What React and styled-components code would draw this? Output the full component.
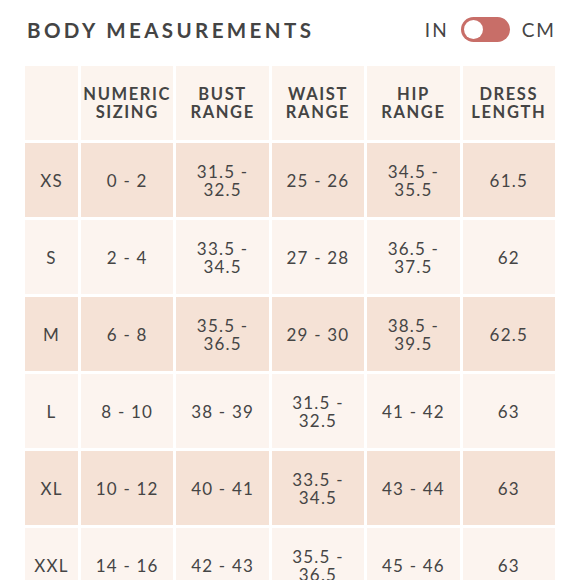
import React from 'react'
import styled, {createGlobalStyle} from 'styled-components'

const GlobalStyle = createGlobalStyle`
    body {
        margin: 0;
        background: #fff;
        font-family: Lato, "Open Sans", sans-serif;
        color: #454545;
    }
`

const columns = ['', 'NUMERIC SIZING', 'BUST RANGE', 'WAIST RANGE', 'HIP RANGE', 'DRESS LENGTH']

const rows = [
    ['XS', '0 - 2', '31.5 - 32.5', '25 - 26', '34.5 - 35.5', '61.5'],
    ['S', '2 - 4', '33.5 - 34.5', '27 - 28', '36.5 - 37.5', '62'],
    ['M', '6 - 8', '35.5 - 36.5', '29 - 30', '38.5 - 39.5', '62.5'],
    ['L', '8 - 10', '38 - 39', '31.5 - 32.5', '41 - 42', '63'],
    ['XL', '10 - 12', '40 - 41', '33.5 - 34.5', '43 - 44', '63'],
    ['XXL', '14 - 16', '42 - 43', '35.5 - 36.5', '45 - 46', '63'],
]

// split "31.5 - 32.5" onto two lines like the original chart
const splitRange = (text) => {
    if (text.length < 9) return text
    const [a, b] = text.split(' - ')
    return <>{a} -<br />{b}</>
}

const App = () => {
    return (
        <Page>
            <GlobalStyle />
            <Header>
                <Title>BODY MEASUREMENTS</Title>
                <UnitSwitch>
                    <UnitLabel>IN</UnitLabel>
                    <Track><Knob /></Track>
                    <UnitLabel>CM</UnitLabel>
                </UnitSwitch>
            </Header>
            <Chart>
                {columns.map((col, i) => (
                    <HeadCell key={i}>
                        {col.split(' ').map((w, j) => <div key={j}>{w}</div>)}
                    </HeadCell>
                ))}
                {rows.map((row, r) => row.map((val, c) => (
                    <Cell key={r + '-' + c} $shade={r % 2 === 0}>
                        {c === 0 ? val : splitRange(val)}
                    </Cell>
                )))}
            </Chart>
        </Page>
    )
}

export default App

const Page = styled.div`
    width: 580px;
    height: 580px;
    overflow: hidden;
    padding: 17px 25px 0 25px;
    box-sizing: border-box;
`

const Header = styled.div`
    display: flex;
    align-items: center;
    justify-content: space-between;
    height: 25px;
    margin-bottom: 24px;
`

const Title = styled.h1`
    margin: 0 0 0 2px;
    font-size: 20.5px;
    font-weight: 700;
    letter-spacing: 3.4px;
    color: #444;
`

const UnitSwitch = styled.div`
    display: flex;
    align-items: center;
    gap: 12px;
    margin-right: -1px;
`

const UnitLabel = styled.span`
    font-size: 19px;
    letter-spacing: 2px;
    color: #454545;
`

const Track = styled.div`
    width: 49px;
    height: 25px;
    border-radius: 13px;
    background: #c86e68;
    display: flex;
    align-items: center;
    padding: 0 3px;
    box-sizing: border-box;
`

const Knob = styled.div`
    width: 19px;
    height: 19px;
    border-radius: 50%;
    background: #fff;
`

const Chart = styled.div`
    display: grid;
    grid-template-columns: 53px repeat(5, 1fr);
    grid-auto-rows: 74px;
    gap: 3px;
    width: 530px;
`

const HeadCell = styled.div`
    background: #fcf4ee;
    display: flex;
    flex-direction: column;
    align-items: center;
    justify-content: center;
    font-size: 16.5px;
    font-weight: 700;
    letter-spacing: 1.6px;
    line-height: 18px;
    color: #444;
    text-align: center;
`

const Cell = styled.div`
    background: ${p => p.$shade ? '#f5e2d6' : '#fcf4ef'};
    display: flex;
    align-items: center;
    justify-content: center;
    text-align: center;
    font-size: 17px;
    letter-spacing: 1.2px;
    line-height: 18px;
    color: #454545;
    padding-top: 1px;
`
